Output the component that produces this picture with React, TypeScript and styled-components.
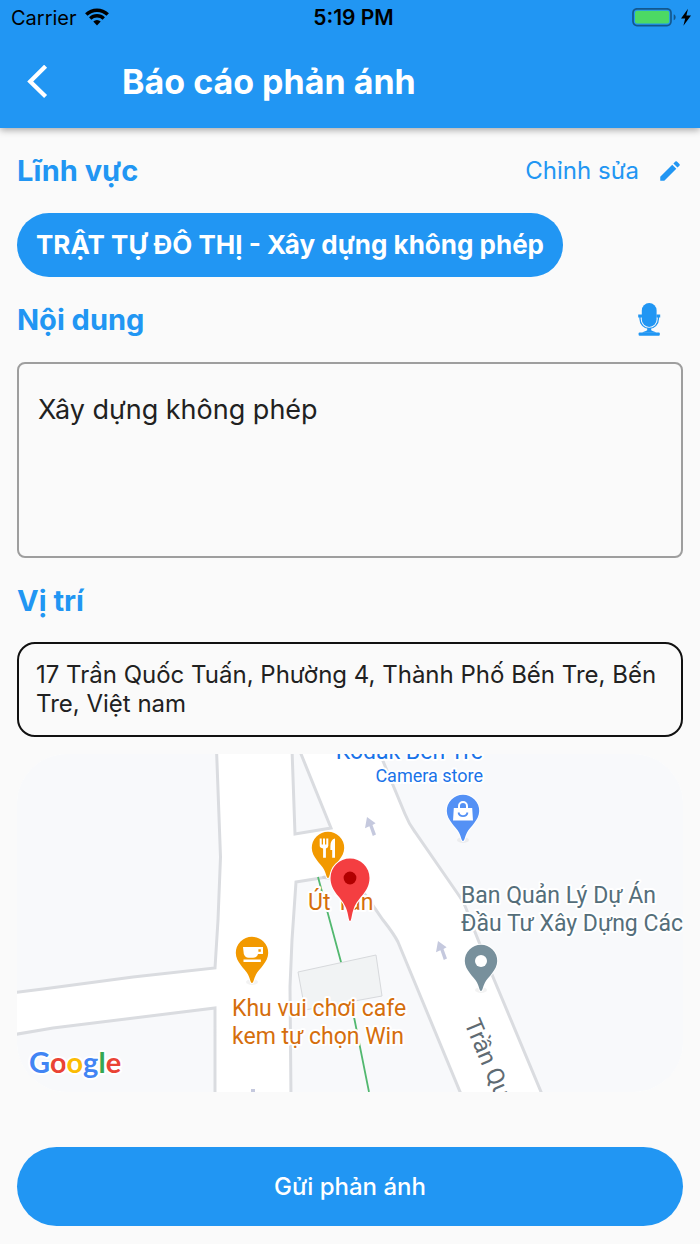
import React from "react";
import styled, { createGlobalStyle } from "styled-components";

const BLUE = "#2196f3";

const GlobalStyle = createGlobalStyle`
  * { box-sizing: border-box; }
  body {
    margin: 0;
    background: #fafafa;
    color: #212121;
    font-family: Inter, "Liberation Sans", sans-serif;
  }
  h1, h2, p { margin: 0; }
  button, textarea { font-family: inherit; }
`;

const Screen = styled.div`
  display: flex;
  flex-direction: column;
  min-height: 100vh;
`;

const Header = styled.header`
  background: ${BLUE};
  box-shadow: 0 2px 7px rgba(0, 0, 0, 0.35);
`;

const StatusBar = styled.div`
  display: grid;
  grid-template-columns: 1fr auto 1fr;
  align-items: center;
  height: 36px;
  padding: 0 8px 0 11px;
  color: #000;
  font-size: 20px;
  line-height: 24px;
`;

const Carrier = styled.div`
  display: flex;
  align-items: center;
  gap: 7px;
`;

const Clock = styled.time`
  padding-left: 4px;
  font-size: 21px;
  font-weight: 600;
`;

const Power = styled.div`
  display: flex;
  justify-content: flex-end;
`;

const AppBar = styled.div`
  display: flex;
  align-items: center;
  height: 92px;
  padding: 0 16px;
`;

const BackButton = styled.button`
  display: flex;
  align-items: center;
  justify-content: center;
  width: 44px;
  height: 44px;
  margin-right: 62px;
  padding: 0;
  border: 0;
  background: none;
  cursor: pointer;
`;

const Title = styled.h1`
  color: #fff;
  font-size: 34px;
  line-height: 40px;
  font-weight: 700;
`;

const Form = styled.form`
  display: flex;
  flex-direction: column;
  gap: 18px;
  padding: 18px 17px;
`;

const Section = styled.section<{ $gap?: number }>`
  display: flex;
  flex-direction: column;
  align-items: stretch;
  gap: ${({ $gap = 18 }) => $gap}px;
`;

const SectionHead = styled.div`
  display: flex;
  align-items: center;
  justify-content: space-between;
  height: 49px;
`;

const SectionTitle = styled.h2`
  color: ${BLUE};
  font-size: 29px;
  line-height: 36px;
  font-weight: 700;
`;

const EditButton = styled.button`
  display: flex;
  align-items: center;
  gap: 18px;
  padding: 0;
  border: 0;
  background: none;
  color: ${BLUE};
  font-size: 24px;
  line-height: 28px;
  cursor: pointer;
`;

const MicButton = styled.button`
  display: flex;
  padding: 0 21px;
  border: 0;
  background: none;
  cursor: pointer;
`;

const Chip = styled.div`
  align-self: flex-start;
  padding: 16px 19px;
  border-radius: 32px;
  background: ${BLUE};
  color: #fff;
  font-size: 26px;
  line-height: 32px;
  font-weight: 700;
`;

const Content = styled.textarea`
  display: block;
  width: 100%;
  height: 196px;
  padding: 30px 19px;
  border: 2px solid #9e9e9e;
  border-radius: 8px;
  background: transparent;
  color: #212121;
  font-size: 27px;
  line-height: 32px;
  resize: none;
  outline: none;
`;

const Address = styled.p`
  padding: 16px 17px 17px;
  border: 2px solid #111;
  border-radius: 18px;
  font-size: 24px;
  line-height: 29px;
`;

const MapFrame = styled.div`
  height: 338px;
  border-radius: 50px;
  overflow: hidden;
`;

const MapCanvas = styled.svg`
  display: block;
  width: 100%;
  height: 100%;
`;

const MapLabel = styled.text<{ $size?: number }>`
  font-family: Roboto, Inter, sans-serif;
  font-size: ${({ $size = 23 }) => $size}px;
  paint-order: stroke;
  stroke: #fff;
  stroke-width: 4px;
  stroke-linejoin: round;
`;

const MapLogo = styled(MapLabel)`
  font-family: Lato, sans-serif;
  font-weight: 700;
`;

const SubmitButton = styled.button`
  height: 79px;
  margin-top: 37px;
  border: 0;
  border-radius: 40px;
  background: ${BLUE};
  color: #fff;
  font-size: 24px;
  line-height: 28px;
  font-weight: 500;
  cursor: pointer;
`;

const WifiIcon = () => (
  <svg width="26" height="20" viewBox="0 0 26 20" fill="none" stroke="#000" aria-hidden="true">
    <path d="M2.3 6.6A15.3 15.3 0 0 1 23.7 6.6" strokeWidth="3.5" />
    <path d="M6.2 10.5A9.8 9.8 0 0 1 19.8 10.5" strokeWidth="3.3" />
    <path d="M9.3 13.6A5.3 5.3 0 0 1 16.7 13.6L13 17.4Z" fill="#000" stroke="none" />
  </svg>
);

const BatteryIcon = () => (
  <svg width="60" height="20" viewBox="0 0 60 20" aria-hidden="true">
    <rect x="1" y=".8" width="38" height="16.8" rx="4" fill="none" stroke="#000" strokeOpacity=".42" strokeWidth="1.7" />
    <rect x="3" y="2.8" width="34.2" height="12.8" rx="2" fill="#4cd964" />
    <path d="M41.7 6.2c2.6.8 2.6 5.2 0 6z" fill="#000" fillOpacity=".42" />
    <path d="M56 .8 49 10.4h4.2L51.4 17.7 59 7.6h-4.6z" fill="#000" />
  </svg>
);

const BackIcon = () => (
  <svg width="22" height="34" viewBox="0 0 22 34" fill="none" stroke="#fff" strokeWidth="4.2" aria-hidden="true">
    <path d="M18.6 1.2 3.2 16.4 18.6 31.6" />
  </svg>
);

const PencilIcon = () => (
  <svg width="26" height="26" viewBox="0 0 24 24" fill={BLUE} aria-hidden="true">
    <path d="M3 17.25V21h3.75L17.81 9.94l-3.75-3.75L3 17.25zM20.71 7.04a1 1 0 0 0 0-1.41l-2.34-2.34a1 1 0 0 0-1.41 0l-1.83 1.83 3.75 3.75 1.83-1.83z" />
  </svg>
);

const MicIcon = () => (
  <svg width="24" height="34" viewBox="0 0 24 34" fill={BLUE} aria-hidden="true">
    <rect x="3.8" y="0" width="14.8" height="24" rx="7.4" />
    <path d="M.2 11.6h3.8v2.8H.2zM18.4 11.6h3.8v2.8h-3.8z" />
    <path d="M2 14v1.800a9.2 9.6 0 0 0 18.4 0v-1.800" fill="none" stroke={BLUE} strokeWidth="1.3" />
    <path d="M9.2 25h4v2.2c1.8 1 4 1.4 5 2.6H4.2c1-1.2 3.2-1.6 5-2.6z" />
    <rect x=".6" y="29.4" width="21.2" height="3.4" rx="1" />
  </svg>
);

type PinProps = { x: number; y: number; color: string; children?: React.ReactNode };

/* Place pin whose round head is centred on (x, y). */
const Pin = ({ x, y, color, children }: PinProps) => (
  <g transform={`translate(${x} ${y})`}>
    <ellipse cx="0" cy="29" rx="6" ry="3" fill="#000" opacity=".05" />
    <path
      d="M0 30C-1.6 30-1.6 26-4 21.5C-7 16-16.2 9-16.2 0A16.2 16.2 0 0 1 16.2 0C16.2 9 7 16 4 21.5C1.6 26 1.6 30 0 30Z"
      fill={color}
      stroke="#fff"
      strokeWidth="2"
      paintOrder="stroke"
    />
    {children}
  </g>
);

const DirectionArrow = ({ x, y }: { x: number; y: number }) => (
  <path
    transform={`translate(${x} ${y})`}
    d="M0 0 8.6 6.2 5.5 8 9 17.6 5.8 19 2.4 9.2-2 11.2Z"
    fill="#c5c9de"
  />
);

const StreetMap = () => (
  <MapCanvas viewBox="0 0 666 338" preserveAspectRatio="xMidYMid slice" role="img" aria-label="Google Maps">
    <rect x="-700" width="2066" height="338" fill="#fff" />
    <g fill="#f8f9fb" stroke="#dadce0" strokeWidth="3">
      <path d="M-700-5H199.5L203.5 103 201 166 198 214 116 223 26 235-5 239-700 330Z" />
      <path d="M-700 370-5 281 36 274 198 254V345H-700Z" />
      <path d="M275-5 278 80 314 74 282-5Z" />
      <path d="M279 128 310 123 331 120 350 143 366 166Q377 180 381 188L446 345H274L273 233 275 186Z" />
      <path d="M361-5 388 60Q392 70 398 78L443 143Q449 152 452 163L476 223 527 345H1400V-5Z" />
    </g>
    <path d="M301 123 324 208 337 263 352 338" fill="none" stroke="#52b86f" strokeWidth="1.8" />
    <path d="M281 218 359 201 365 242 288 256Z" fill="#f1f3f4" stroke="#d7d9dc" />
    <DirectionArrow x={350} y={63} />
    <DirectionArrow x={421} y={187} />
    <rect x="234" y="335" width="4" height="3" fill="#c5c9de" />

    <MapLabel x="466" y="5" textAnchor="end" fill="#1a73e8">Kodak Bến Tre</MapLabel>
    <MapLabel x="466" y="28" textAnchor="end" fill="#1a73e8" $size={18}>Camera store</MapLabel>
    <MapLabel x="291" y="156" fill="#d56e0c">Út Tân</MapLabel>
    <MapLabel x="444" y="149" fill="#546e7a">Ban Quản Lý Dự Án</MapLabel>
    <MapLabel x="444" y="177" fill="#546e7a">Đầu Tư Xây Dựng Các</MapLabel>
    <MapLabel x="215" y="262" fill="#d56e0c">Khu vui chơi cafe</MapLabel>
    <MapLabel x="215" y="290" fill="#d56e0c">kem tự chọn Win</MapLabel>
    <MapLabel transform="translate(447 269) rotate(67)" fill="#5f6b73" $size={24}>Trần Quốc Tuấn</MapLabel>

    <Pin x={311} y={94} color="#f29900">
      <path
        d="M-8.3-9.5h2v6h1.3v-6h2v6h1.3v-6h2v7.3q0 2.2-2.4 2.7v9.2h-2.8v-9.2q-3.4-.5-3.4-2.7zM2.4-2q0-6.5 4.6-7.5v19.2H4.2V2H2.4z"
        fill="#fff"
      />
    </Pin>
    <Pin x={235} y={199} color="#f29900">
      <path
        d="M-9-6H11V.5Q11 1 10 1H6Q5 4.7 1 4.7H-3.5Q-7 4.7-8.2 1ZM6.4-3.8V-1.2H8.8V-3.8ZM-8.5 6.4H8.8V9H-8.5Z"
        fill="#fff"
        fillRule="evenodd"
      />
    </Pin>
    <Pin x={446} y={57} color="#5491f5">
      <path d="M-9.2-3H9.2L10 9.5H-10Z" fill="#fff" />
      <path d="M-4-3V-5A4 4 0 0 1 4-5V-3" fill="none" stroke="#fff" strokeWidth="2" />
      <path d="M-4.5 1.5A4.6 4.6 0 0 0 4.5 1.5" fill="none" stroke="#5491f5" strokeWidth="1.8" />
    </Pin>
    <Pin x={464} y={207} color="#78909c">
      <circle r="6" fill="#fff" />
    </Pin>
    <g transform="translate(333 124)">
      <path
        d="M0 43C-1.5 43-1.5 36-4 30C-8 19-19.5 14-19.5 0A19.5 19.5 0 0 1 19.5 0C19.5 14 8 19 4 30C1.5 36 1.5 43 0 43Z"
        fill="#f43e41"
        stroke="#fff"
        strokeWidth="2"
        paintOrder="stroke"
      />
      <circle r="6.4" fill="#b10000" />
    </g>

    <MapLogo x="12" y="319" $size={29}>
      <tspan fill="#4285f4">G</tspan>
      <tspan fill="#ea4335">o</tspan>
      <tspan fill="#fbbc04">o</tspan>
      <tspan fill="#4285f4">g</tspan>
      <tspan fill="#34a853">l</tspan>
      <tspan fill="#ea4335">e</tspan>
    </MapLogo>
  </MapCanvas>
);

export default function App() {
  return (
    <Screen>
      <GlobalStyle />
      <Header>
        <StatusBar>
          <Carrier>
            Carrier
            <WifiIcon />
          </Carrier>
          <Clock>5:19 PM</Clock>
          <Power>
            <BatteryIcon />
          </Power>
        </StatusBar>
        <AppBar>
          <BackButton type="button" aria-label="Quay lại">
            <BackIcon />
          </BackButton>
          <Title>Báo cáo phản ánh</Title>
        </AppBar>
      </Header>

      <Form onSubmit={(event) => event.preventDefault()}>
        <Section>
          <SectionHead>
            <SectionTitle>Lĩnh vực</SectionTitle>
            <EditButton type="button">
              Chỉnh sửa
              <PencilIcon />
            </EditButton>
          </SectionHead>
          <Chip>TRẬT TỰ ĐÔ THỊ - Xây dựng không phép</Chip>
        </Section>

        <Section>
          <SectionHead>
            <SectionTitle as="label" htmlFor="content">Nội dung</SectionTitle>
            <MicButton type="button" aria-label="Nhập bằng giọng nói">
              <MicIcon />
            </MicButton>
          </SectionHead>
          <Content id="content" defaultValue="Xây dựng không phép" spellCheck={false} />
        </Section>

        <Section $gap={17}>
          <SectionHead>
            <SectionTitle>Vị trí</SectionTitle>
          </SectionHead>
          <Address>17 Trần Quốc Tuấn, Phường 4, Thành Phố Bến Tre, Bến Tre, Việt nam</Address>
          <MapFrame>
            <StreetMap />
          </MapFrame>
        </Section>

        <SubmitButton type="submit">Gửi phản ánh</SubmitButton>
      </Form>
    </Screen>
  );
}
